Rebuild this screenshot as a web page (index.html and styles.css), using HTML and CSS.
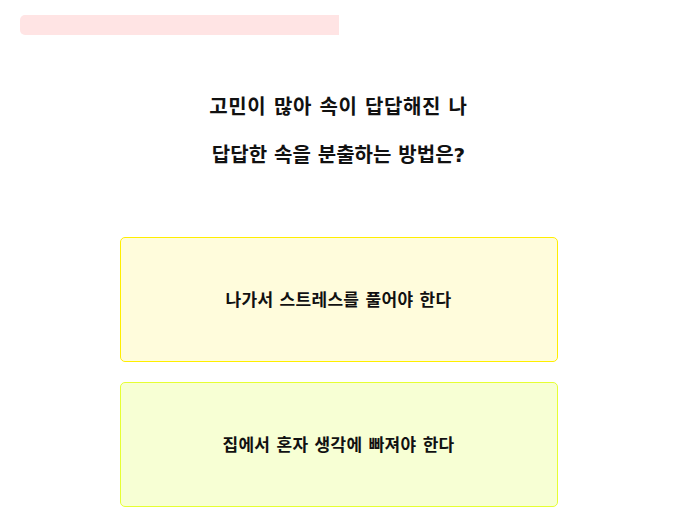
FILE: index.html
```html
<!DOCTYPE html>
<html lang="ko">
<head>
  <meta charset="UTF-8" />
  <meta name="viewport" content="width=device-width, initial-scale=1.0" />
  <title>심리 테스트</title>
  <link rel="stylesheet" href="styles.css">
</head>
<body>

  <div class="progress">
    <div class="progress-bar" style="width: 50%;"></div>
  </div>

  <div class="question">
    <p>고민이 많아 속이 답답해진 나</p>
    <p>답답한 속을 분출하는 방법은?</p>
  </div>

  <div class="answers">
    <button class="answer answer-a">나가서 스트레스를 풀어야 한다</button>
    <button class="answer answer-b">집에서 혼자 생각에 빠져야 한다</button>
  </div>

</body>
</html>
```

FILE: styles.css
```css
body {
  font-family: "DejaVu Sans", "Noto Sans CJK KR", sans-serif;
  background-color: #ffffff;
  color: #111;
  margin: 0;
  padding: 15px 16px 0 20px;
}
.progress {
  height: 20px;
}
.progress-bar {
  height: 100%;
  background-color: #ffe4e4;
  border-radius: 5px 0 0 5px;
}
.question {
  text-align: center;
  font-size: 20px;
  font-weight: 700;
  padding-top: 58px;
}
.question p {
  margin: 0 0 20px;
  line-height: 28px;
}
.question p:first-child {
  letter-spacing: 0.6px;
}
.answers {
  display: flex;
  flex-direction: column;
  align-items: center;
  gap: 20px;
  margin-top: 68px;
}
.answer {
  width: 438px;
  height: 125px;
  padding-bottom: 4px;
  border-radius: 5px;
  font-family: inherit;
  font-size: 17px;
  font-weight: 700;
  letter-spacing: 0.3px;
  color: #111;
  cursor: pointer;
}
.answer-a {
  background-color: #fffcdc;
  border: 1px solid #ffee00;
}
.answer-b {
  background-color: #f7ffd4;
  border: 1px solid #e6ff33;
}
```
